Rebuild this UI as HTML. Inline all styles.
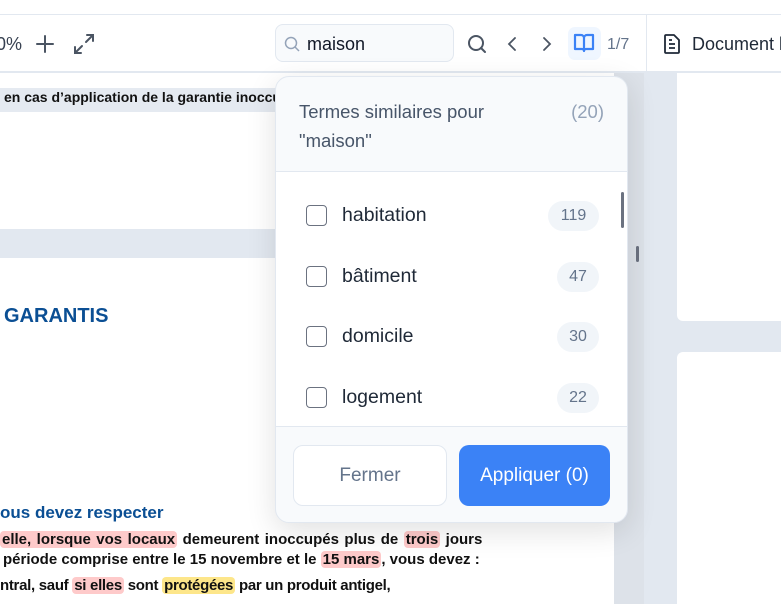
<!DOCTYPE html>
<html><head><meta charset="utf-8"><style>
*{box-sizing:border-box;margin:0;padding:0}
body{width:781px;height:604px;overflow:hidden;position:relative;background:#e2e8f0;font-family:"Liberation Sans",sans-serif}
.abs{position:absolute}
.sans{font-family:"Liberation Sans",sans-serif}
.doc{font-weight:bold;color:#111;font-size:15px;white-space:nowrap}
.hl{background:#fecaca;border-radius:4px;padding:0 2px}
.hy{background:#fde68a;border-radius:4px;padding:0 2px}
.row{position:absolute;left:0;width:353px;height:60px}
.cb{position:absolute;left:30px;width:21px;height:21px;border:1.5px solid #6b7280;border-radius:4px;background:#fff}
.lab{position:absolute;left:66px;font-size:19.5px;color:#1f2937}
.cnt{position:absolute;right:30px;height:30px;border-radius:15px;background:#f1f5f9;color:#64748b;font-size:16px;line-height:30px;text-align:center}
</style></head><body>
<div class="abs" style="left:0;top:0;width:781px;height:15px;background:#fff;border-bottom:1px solid #e2e8f0"></div>
<div class="abs" style="left:0;top:15px;width:781px;height:57px;background:#fff;border-bottom:1px solid #e2e8f0"></div>
<div class="abs" style="left:646px;top:15px;width:1px;height:57px;background:#e2e8f0"></div>
<div class="abs sans" style="left:-4px;top:34px;font-size:18px;color:#374151">0%</div>
<svg class="abs" style="left:34px;top:33px" width="22" height="22" viewBox="0 0 22 22" fill="none" stroke="#4b5563" stroke-width="2" stroke-linecap="round"><path d="M11 3v16M3 11h16"/></svg>
<svg class="abs" style="left:72px;top:32px" width="24" height="24" viewBox="0 0 24 24" fill="none" stroke="#4b5563" stroke-width="2" stroke-linecap="round"><path d="M15 3h6v6M21 3l-7 7M9 21H3v-6M3 21l7-7"/></svg>
<div class="abs" style="left:275px;top:24px;width:179px;height:38px;border:1px solid #e2e8f0;border-radius:8px;background:#f8fafc"></div>
<svg class="abs" style="left:284px;top:36px" width="16" height="16" viewBox="0 0 16 16" fill="none" stroke="#94a3b8" stroke-width="1.5"><circle cx="7" cy="7" r="5.5"/><path d="M11 11l4 4"/></svg>
<div class="abs sans" style="left:307px;top:34px;font-size:18px;color:#111827">maison</div>
<svg class="abs" style="left:466px;top:33px" width="22" height="22" viewBox="0 0 22 22" fill="none" stroke="#4b5563" stroke-width="2" stroke-linecap="round"><circle cx="10" cy="10" r="7"/><path d="M15 15l4 4"/></svg>
<svg class="abs" style="left:505px;top:36px" width="14" height="16" viewBox="0 0 14 16" fill="none" stroke="#4b5563" stroke-width="1.8" stroke-linecap="round"><path d="M10 2L4 8l6 6"/></svg>
<svg class="abs" style="left:540px;top:36px" width="14" height="16" viewBox="0 0 14 16" fill="none" stroke="#4b5563" stroke-width="1.8" stroke-linecap="round"><path d="M4 2l6 6-6 6"/></svg>
<div class="abs" style="left:568px;top:27px;width:33px;height:33px;border-radius:7px;background:#eff6ff"></div>
<svg class="abs" style="left:573px;top:33px" width="22" height="20" viewBox="0 0 22 20" fill="none" stroke="#3b82f6" stroke-width="2.2" stroke-linejoin="round"><path d="M2 2h6a3 3 0 0 1 3 3v13a2 2 0 0 0-2-2H2zM20 2h-6a3 3 0 0 0-3 3v13a2 2 0 0 1 2-2h7z"/></svg>
<div class="abs sans" style="left:607px;top:36px;font-size:16px;color:#64748b">1/7</div>
<svg class="abs" style="left:663px;top:34px" width="18" height="20" viewBox="0 0 18 20" fill="none" stroke="#1f2937" stroke-width="1.8" stroke-linejoin="round"><path d="M3 1h8l5 5v12a1 1 0 0 1-1 1H3a1 1 0 0 1-1-1V2a1 1 0 0 1 1-1z"/><path d="M6 10h6M6 14h6M6 6h3"/></svg>
<div class="abs sans" style="left:692px;top:34px;font-size:18px;color:#1f2937;white-space:nowrap">Document l</div>

<div class="abs" style="left:0;top:73px;width:614px;height:531px;background:#e2e8f0"></div>
<div class="abs" style="left:0;top:73px;width:614px;height:156px;background:#fff"></div>
<div class="abs" style="left:0;top:88px;width:480px;height:24px;background:#e5eaf1"></div>
<div class="abs doc" style="left:4px;top:89px;font-size:14px">en cas d’application de la garantie inoccupation</div>
<div class="abs" style="left:0;top:258px;width:614px;height:346px;background:#fff"></div>
<div class="abs" style="left:4px;top:305px;font-size:20px;font-weight:bold;color:#0b4f94">GARANTIS</div>
<div class="abs" style="left:0;top:503px;font-size:17px;font-weight:bold;color:#0b4f94">ous devez respecter</div>
<div class="abs doc" style="left:0;top:531px;word-spacing:1.3px"><span class="hl">elle, lorsque vos locaux</span> demeurent inoccupés plus de <span class="hl">trois</span> jours</div>
<div class="abs doc" style="left:3px;top:551px">période comprise entre le 15 novembre et le <span class="hl">15 mars</span>, vous devez :</div>
<div class="abs doc" style="left:0;top:577px;letter-spacing:-0.3px">ntral, sauf <span class="hl">si elles</span> sont <span class="hy">protégées</span> par un produit antigel,</div>

<div class="abs" style="left:614px;top:73px;width:30px;height:531px;background:#dde2e9"></div>
<div class="abs" style="left:677px;top:73px;width:104px;height:248px;background:#fff;border-radius:0 0 0 6px"></div>
<div class="abs" style="left:677px;top:352px;width:104px;height:252px;background:#fff;border-radius:6px 0 0 0"></div>
<div class="abs" style="left:636px;top:246px;width:3px;height:16px;background:#6b7280;border-radius:2px"></div>

<div class="abs" style="left:275px;top:76px;width:353px;height:447px;background:#f8fafc;border:1px solid #e2e8f0;border-radius:14px;box-shadow:0 8px 30px rgba(0,0,0,.12);overflow:hidden">
 <div class="abs sans" style="left:23px;top:20px;font-size:18.5px;line-height:29px;color:#475569">Termes similaires pour<br>"maison"</div>
 <div class="abs sans" style="right:23px;top:20px;font-size:18.5px;line-height:29px;color:#94a3b8">(20)</div>
 <div class="abs" style="left:0;top:94px;width:353px;height:256px;background:#fff;border-top:1px solid #e2e8f0;border-bottom:1px solid #e2e8f0">
  <div class="abs" style="left:345px;top:20px;width:3px;height:36px;background:#6b7280;border-radius:2px"></div>
  <div class="row sans" style="top:9px"><div class="cb" style="top:24px"></div><div class="lab" style="top:23px">habitation</div><div class="cnt" style="top:20px;width:51px">119</div></div>
  <div class="row sans" style="top:70px"><div class="cb" style="top:24px"></div><div class="lab" style="top:23px">bâtiment</div><div class="cnt" style="top:20px;width:42px">47</div></div>
  <div class="row sans" style="top:130px"><div class="cb" style="top:24px"></div><div class="lab" style="top:23px">domicile</div><div class="cnt" style="top:20px;width:42px">30</div></div>
  <div class="row sans" style="top:191px"><div class="cb" style="top:24px"></div><div class="lab" style="top:23px">logement</div><div class="cnt" style="top:20px;width:42px">22</div></div>
 </div>
 <div class="abs sans" style="left:17px;top:368px;width:154px;height:61px;background:#fff;border:1px solid #e2e8f0;border-radius:10px;text-align:center;line-height:59px;font-size:19px;color:#64748b">Fermer</div>
 <div class="abs sans" style="left:183px;top:368px;width:151px;height:61px;background:#3b82f6;border-radius:10px;text-align:center;line-height:61px;font-size:19px;color:#fff">Appliquer (0)</div>
</div>
</body></html>
